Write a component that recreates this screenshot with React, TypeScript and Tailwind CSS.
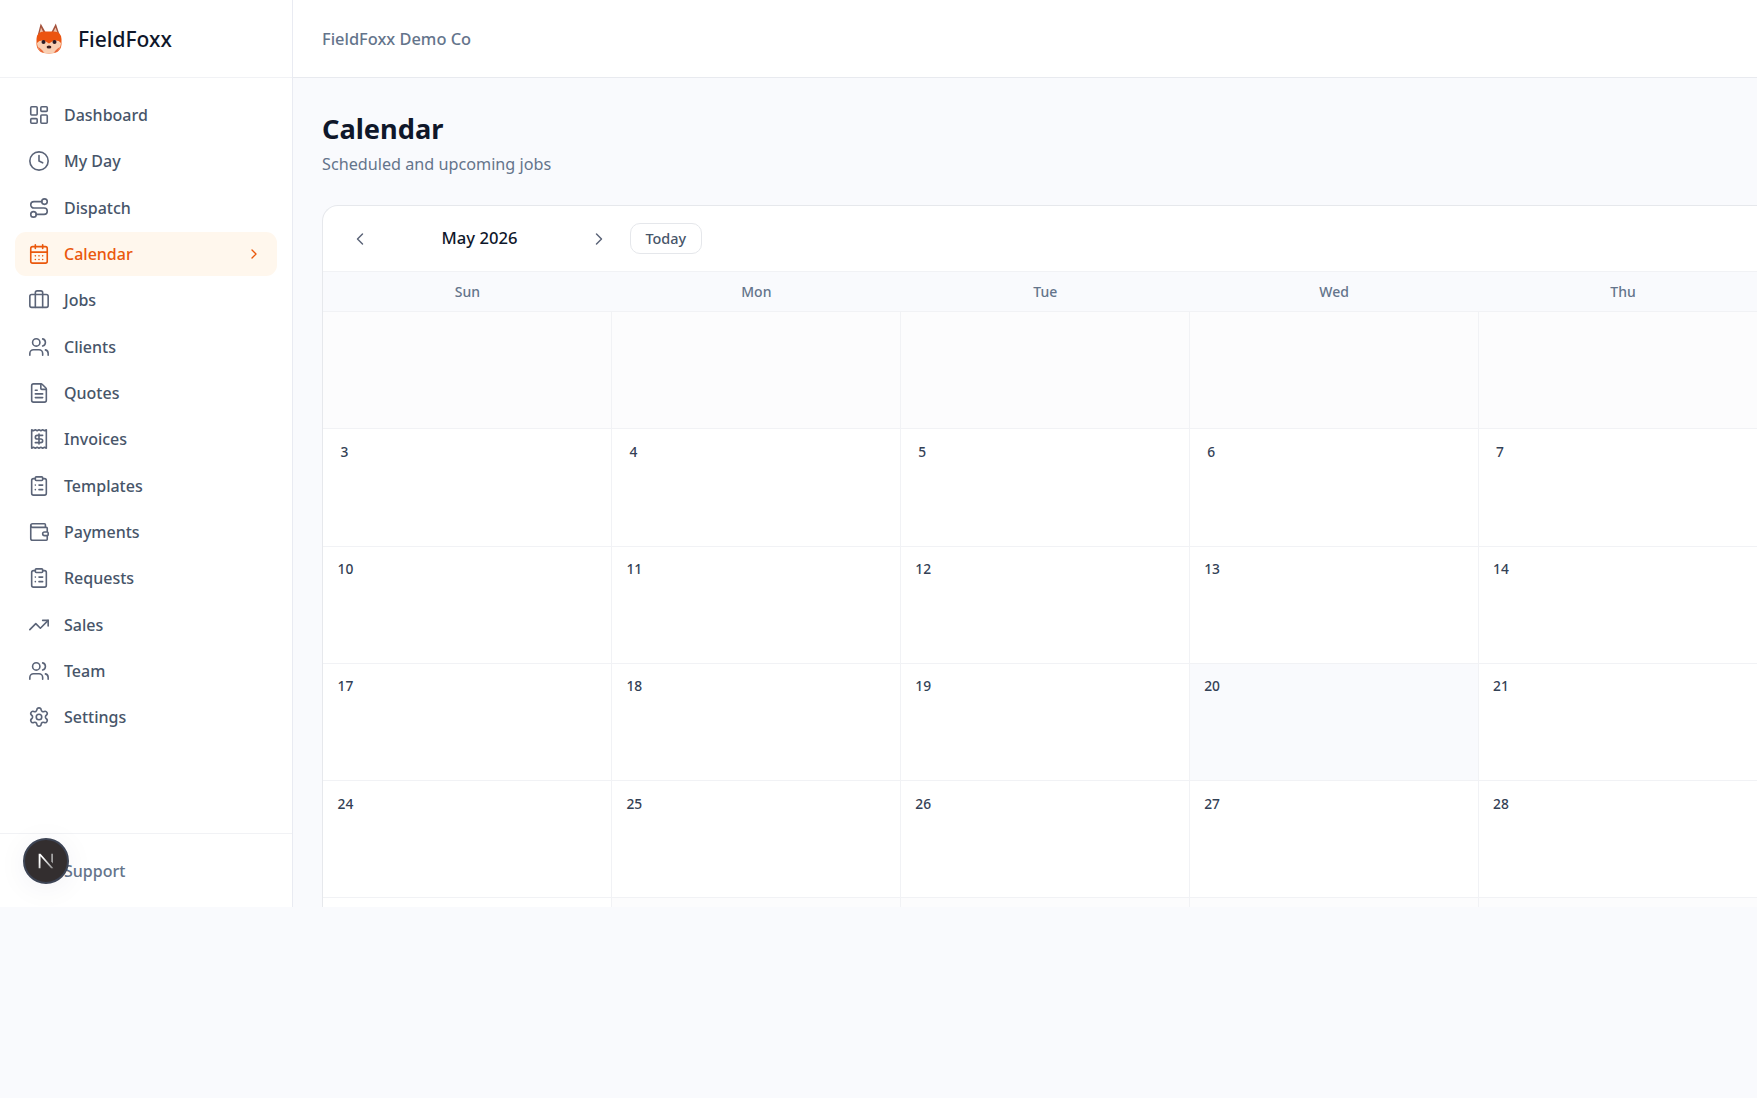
import React from "react";
import {
  Briefcase,
  CalendarDays,
  ChevronLeft,
  ChevronRight,
  CircleHelp,
  ClipboardList,
  Clock,
  FileText,
  LayoutDashboard,
  Receipt,
  Route,
  Settings,
  TrendingUp,
  Users,
  Wallet,
} from "lucide-react";

const navItems = [
  { label: "Dashboard", icon: LayoutDashboard },
  { label: "My Day", icon: Clock },
  { label: "Dispatch", icon: Route },
  { label: "Calendar", icon: CalendarDays, active: true },
  { label: "Jobs", icon: Briefcase },
  { label: "Clients", icon: Users },
  { label: "Quotes", icon: FileText },
  { label: "Invoices", icon: Receipt },
  { label: "Templates", icon: ClipboardList },
  { label: "Payments", icon: Wallet },
  { label: "Requests", icon: ClipboardList },
  { label: "Sales", icon: TrendingUp },
  { label: "Team", icon: Users },
  { label: "Settings", icon: Settings },
];

const days = ["Sun", "Mon", "Tue", "Wed", "Thu", "Fri", "Sat"];

const weeks: (number | null)[][] = [
  [null, null, null, null, null, 1, 2],
  [3, 4, 5, 6, 7, 8, 9],
  [10, 11, 12, 13, 14, 15, 16],
  [17, 18, 19, 20, 21, 22, 23],
  [24, 25, 26, 27, 28, 29, 30],
  [31, null, null, null, null, null, null],
];

// logo
const FoxLogo = () => (
  <svg viewBox="0 0 26 31" className="w-[26px] h-[31px] shrink-0">
    <path d="M1.500 13 L4.700 0.500 L10 10 L15 10 L19.800 0.500 L24 13 Z" fill="#a4523c" />
    <path d="M3.500 11 L5 4.500 L8 10.500 Z M22 11 L19.500 4.500 L16.500 10.500 Z" fill="#f0c2aa" />
    <path d="M0.500 16 Q1 8.500 8 8.500 L18 8.500 Q25 8.500 25.500 16 L25.500 21 Q25 30.500 13 30.500 Q1 30.500 0.500 21 Z" fill="#ec5410" />
    <path d="M1 20 Q4 16.500 9 18 L13 20.500 L17 18 Q22 16.500 25 20 Q24.500 30.500 13 30.500 Q1.500 30.500 1 20 Z" fill="#f9cfb2" />
    <circle cx="7.500" cy="19" r="2" fill="#2a1b26" />
    <circle cx="18.500" cy="19" r="2" fill="#2a1b26" />
    <ellipse cx="13" cy="24" rx="2.400" ry="1.500" fill="#3a1f1f" />
    <path d="M1.500 24 Q5 25 8 29.500 L5 29 Z M24.500 24 Q21 25 18 29.500 L21 29 Z" fill="#e8663a" />
  </svg>
);

// next dev badge
const NextBadge = () => (
  <div className="absolute left-[23px] top-[838px] w-[46px] h-[46px] rounded-full bg-[#332e2f] border-2 border-[#3d4454] flex items-center justify-center shadow-[0_4px_30px_rgba(30,40,80,0.06)]">
    <svg viewBox="0 0 18 18" className="w-[22px] h-[22px]">
      <defs>
        <linearGradient id="nGrad" x1="0.300" y1="0.300" x2="1" y2="1">
          <stop offset="0" stopColor="#ffffff" />
          <stop offset="1" stopColor="#8f8f8f" />
        </linearGradient>
      </defs>
      <path d="M3 15 V3 H4.500 L15 15 H13.200 L4.500 5.200 V15 Z" fill="url(#nGrad)" />
      <path d="M13.300 3 H14.700 V11 L13.300 9.400 Z" fill="#a8a8a8" />
    </svg>
  </div>
);

const App = () => {
  return (
    <div className="relative min-h-[1098px] bg-[#f9fafd] font-['Noto_Sans',sans-serif]">
      <div className="flex h-[907px] overflow-hidden">
        {/* Sidebar */}
        <aside className="w-[293px] shrink-0 flex flex-col bg-white border-r border-[#e9ebf2]">
          <div className="h-[78px] shrink-0 flex items-center gap-[16px] pl-[36px] border-b border-[#f1f2f5]">
            <FoxLogo />
            <span className="mt-[2px] text-[21px] leading-none font-medium text-[#0f172a]">FieldFoxx</span>
          </div>
          <nav className="flex-1 flex flex-col gap-[2.350px] pt-[15px] px-[15px]">
            {navItems.map((i) => (
              <div
                key={i.label}
                className={`h-[44px] flex items-center gap-[14px] pl-[13px] pr-[15px] rounded-[11px] ${
                  i.active ? "bg-[#fff7ed] text-[#ea580c]" : "text-[#475569]"
                }`}
              >
                <i.icon className={`w-[22px] h-[22px] ${i.active ? "" : "text-[#5b6478]"}`} strokeWidth={1.75} />
                <span className="flex-1 text-[16px] font-medium">{i.label}</span>
                {i.active && <ChevronRight className="w-[16px] h-[16px]" />}
              </div>
            ))}
          </nav>
          <div className="h-[74px] shrink-0 flex items-center gap-[14px] pl-[28px] border-t border-[#f1f2f5] text-[#64748b]">
            <CircleHelp className="w-[22px] h-[22px]" strokeWidth={1.75} />
            <span className="text-[16px] font-medium">Support</span>
          </div>
        </aside>

        {/* Main */}
        <div className="flex-1 min-w-0 flex flex-col">
          <header className="h-[78px] shrink-0 flex items-center pl-[29px] pt-[2px] bg-white border-b border-[#e8eaef]">
            <span className="text-[16.400px] font-medium text-[#64748b]">FieldFoxx Demo Co</span>
          </header>

          <main className="flex-1 min-h-0 overflow-hidden pt-[33px] pl-[29px]">
            <h1 className="text-[27.200px] leading-[36px] font-bold text-[#0f172a]">Calendar</h1>
            <p className="mt-[3px] text-[16.200px] leading-[28px] text-[#64748b]">Scheduled and upcoming jobs</p>

            {/* Calendar card */}
            <div className="mt-[27px] w-[2026px] rounded-tl-[16px] bg-white border-l border-t border-[#e6e8ec]">
              <div className="h-[65px] flex items-center pl-[23px]">
                <button className="w-[28px] flex justify-center text-[#5b6478]">
                  <ChevronLeft className="w-[20px] h-[20px]" strokeWidth={1.75} />
                </button>
                <span className="w-[211px] text-center text-[16.600px] font-medium text-[#0f172a]">May 2026</span>
                <button className="w-[28px] flex justify-center text-[#5b6478]">
                  <ChevronRight className="w-[20px] h-[20px]" strokeWidth={1.75} />
                </button>
                <button className="ml-[17px] h-[31px] px-[14.500px] rounded-[10px] border border-[#e5e7eb] text-[14.400px] font-medium text-[#475569]">
                  Today
                </button>
              </div>

              <div className="grid grid-cols-[repeat(7,288.900px)] h-[41px] bg-[#f9fafd] border-y border-[#f1f2f5]">
                {days.map((d) => (
                  <div key={d} className="flex items-center justify-center text-[14px] font-medium text-[#64748b]">
                    {d}
                  </div>
                ))}
              </div>

              {weeks.map((w, index) => (
                <div key={index} className="grid grid-cols-[repeat(7,288.900px)]">
                  {w.map((n, c) => (
                    <div
                      key={c}
                      className={`h-[117.300px] pt-[12.500px] pl-[14.500px] border-b border-r border-[#f1f2f5] text-[13.800px] leading-[20px] font-medium text-[#334155] ${
                        n === 20 ? "bg-[#f9fafd]" : n === null ? "bg-[#fcfcfd]" : ""
                      }`}
                    >
                      {n !== null && <span className="inline-block w-[14px] text-center whitespace-nowrap">{n}</span>}
                    </div>
                  ))}
                </div>
              ))}
            </div>
          </main>
        </div>
      </div>

      <NextBadge />
    </div>
  );
};

export default App;
